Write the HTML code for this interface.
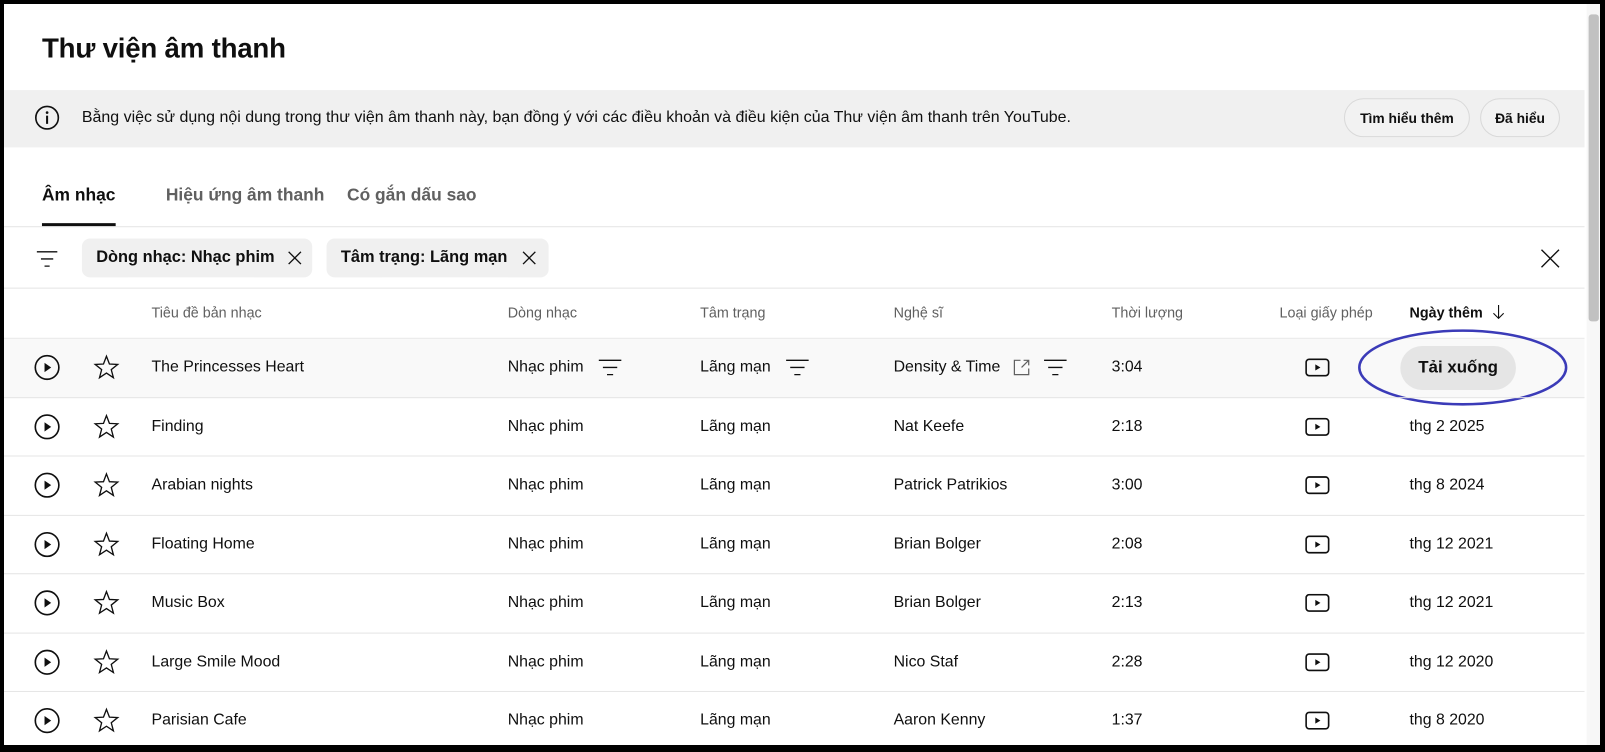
<!DOCTYPE html>
<html><head><meta charset="utf-8"><style>
*{box-sizing:border-box;margin:0;padding:0}
body{width:1605px;height:752px;background:#000;font-family:"Liberation Sans",Arial,sans-serif;color:#0f0f0f;position:relative;overflow:hidden}
.page{position:absolute;left:4px;top:4px;width:1596px;height:741px;background:#fff;overflow:hidden}
.inner{position:absolute;left:-4px;top:-4px;width:1568px;height:735px;transform:scale(1.0236);transform-origin:0 0}
.abs{position:absolute}
.t{position:absolute;white-space:nowrap}
.hl{position:absolute;left:0;width:1548px;height:1px;background:#e5e5e5}
.hdr{font-size:14px;color:#606060;top:297px}
.cell{font-size:15.5px;color:#0f0f0f}
.btn{position:absolute;border:1px solid #d9d9d9;border-radius:19px;font-size:13.5px;font-weight:bold;display:flex;align-items:center;justify-content:center;height:38px;top:96px;background:#f2f2f2}
.chip{position:absolute;top:233px;height:38px;background:#f0f0f0;border-radius:8px;font-size:16px;font-weight:bold;display:flex;align-items:center;padding-left:14px}
</style></head><body>
<div class="page"><div class="inner">
<div class="t" style="left:41px;top:32px;font-size:27px;font-weight:bold;letter-spacing:-0.2px">Thư viện âm thanh</div>
<div class="abs" style="left:0;top:88px;width:1548px;height:56px;background:#f0f0f0"></div>
<svg class="abs" style="left:33px;top:102px" width="26" height="26" viewBox="0 0 26 26"><circle cx="13" cy="13" r="11" fill="none" stroke="#0f0f0f" stroke-width="1.6"/><rect x="12" y="11" width="2" height="8" fill="#0f0f0f"/><circle cx="13" cy="8" r="1.3" fill="#0f0f0f"/></svg>
<div class="t" style="left:80px;top:106px;font-size:15.6px;color:#0f0f0f">Bằng việc sử dụng nội dung trong thư viện âm thanh này, bạn đồng ý với các điều khoản và điều kiện của Thư viện âm thanh trên YouTube.</div>
<div class="btn" style="left:1313px;width:123px">Tìm hiểu thêm</div>
<div class="btn" style="left:1446px;width:78px">Đã hiểu</div>
<div class="t" style="left:41px;top:181px;font-size:17px;font-weight:bold">Âm nhạc</div>
<div class="abs" style="left:41px;top:218px;width:72px;height:3px;background:#0f0f0f"></div>
<div class="t" style="left:162px;top:181px;font-size:17px;font-weight:bold;color:#606060">Hiệu ứng âm thanh</div>
<div class="t" style="left:339px;top:181px;font-size:17px;font-weight:bold;color:#606060">Có gắn dấu sao</div>
<div class="hl" style="top:221px"></div>
<svg class="abs" style="left:34px;top:241px" width="24" height="24" viewBox="0 0 24 24"><path d="M2 5h20M6 12h12M9.5 19h5" stroke="#0f0f0f" stroke-width="1.3" fill="none"/></svg>
<div class="chip" style="left:80px;width:225px">Dòng nhạc: Nhạc phim<svg style="position:absolute;right:10px;top:12px" width="14" height="14" viewBox="0 0 14 14"><path d="M1 1L13 13M13 1L1 13" stroke="#0f0f0f" stroke-width="1.3"/></svg></div>
<div class="chip" style="left:319px;width:217px">Tâm trạng: Lãng mạn<svg style="position:absolute;right:12px;top:12px" width="14" height="14" viewBox="0 0 14 14"><path d="M1 1L13 13M13 1L1 13" stroke="#0f0f0f" stroke-width="1.3"/></svg></div>
<svg class="abs" style="left:1505px;top:243px" width="19" height="19" viewBox="0 0 20 20"><path d="M1 1L19 19M19 1L1 19" stroke="#0f0f0f" stroke-width="1.4"/></svg>
<div class="hl" style="top:281px"></div>
<div class="t hdr" style="left:148px">Tiêu đề bản nhạc</div>
<div class="t hdr" style="left:496px">Dòng nhạc</div>
<div class="t hdr" style="left:684px">Tâm trạng</div>
<div class="t hdr" style="left:873px">Nghệ sĩ</div>
<div class="t hdr" style="left:1086px">Thời lượng</div>
<div class="t hdr" style="left:1250px">Loại giấy phép</div>
<div class="t hdr" style="left:1377px;color:#0f0f0f;font-weight:bold">Ngày thêm</div>
<svg class="abs" style="left:1458px;top:297px" width="12" height="16" viewBox="0 0 12 16"><path d="M6 1V14M1 9L6 14L11 9" stroke="#0f0f0f" stroke-width="1.1" fill="none"/></svg>
<div class="hl" style="top:330px"></div>
<div class="abs" style="left:0;top:331px;width:1548px;height:57px;background:#f9f9f9"></div>

<div id="rows"></div>

<div class="abs" style="left:1550px;top:0;width:14px;height:740px;background:#f7f7f7"></div>
<div class="abs" style="left:1552px;top:14px;width:10px;height:300px;background:#c1c1c1;border-radius:3px"></div>
</div></div>
<script>
var data=[["The Princesses Heart","Density & Time","3:04",""],["Finding","Nat Keefe","2:18","thg 2 2025"],["Arabian nights","Patrick Patrikios","3:00","thg 8 2024"],["Floating Home","Brian Bolger","2:08","thg 12 2021"],["Music Box","Brian Bolger","2:13","thg 12 2021"],["Large Smile Mood","Nico Staf","2:28","thg 12 2020"],["Parisian Cafe","Aaron Kenny","1:37","thg 8 2020"]];
var h="",filt='<svg width="24" height="24" viewBox="0 0 24 24" style="position:absolute;top:-3px;left:0"><path d="M1 5h22M5 12h14M9 19h6" stroke="#0f0f0f" stroke-width="1.3" fill="none"/></svg>';
data.forEach(function(r,i){
 var y=330+i*57.5, cy=y+29;
 h+='<svg class="abs" style="left:33px;top:'+(cy-13)+'px" width="26" height="26" viewBox="0 0 26 26"><circle cx="13" cy="13" r="11.5" fill="none" stroke="#0f0f0f" stroke-width="1.6"/><path d="M10.5 8.5L17 13L10.5 17.5Z" fill="#0f0f0f"/></svg>';
 h+='<svg class="abs" style="left:91px;top:'+(cy-13)+'px" width="26" height="26" viewBox="0 0 26 26"><path d="M13 2L15.9 9.6L24 10L17.7 15.1L19.8 23L13 18.5L6.2 23L8.3 15.1L2 10L10.1 9.6Z" fill="none" stroke="#0f0f0f" stroke-width="1.3"/></svg>';
 var ty=cy-9;
 h+='<div class="t cell" style="left:148px;top:'+ty+'px">'+r[0]+'</div>';
 h+='<div class="t cell" style="left:496px;top:'+ty+'px">Nhạc phim</div>';
 h+='<div class="t cell" style="left:684px;top:'+ty+'px">Lãng mạn</div>';
 h+='<div class="t cell" style="left:873px;top:'+ty+'px">'+r[1]+'</div>';
 h+='<div class="t cell" style="left:1086px;top:'+ty+'px">'+r[2]+'</div>';
 h+='<svg class="abs" style="left:1275px;top:'+(cy-9)+'px" width="26" height="18" viewBox="0 0 26 18"><rect x="1" y="1" width="22" height="16" rx="3" fill="none" stroke="#0f0f0f" stroke-width="1.6"/><path d="M10 6L15 9L10 12Z" fill="#0f0f0f"/></svg>';
 if(i==0){
  h+='<div class="abs" style="left:584px;top:'+(cy-9)+'px">'+filt+'</div>';
  h+='<div class="abs" style="left:767px;top:'+(cy-9)+'px">'+filt+'</div>';
  h+='<svg class="abs" style="left:989px;top:'+(cy-9)+'px" width="18" height="18" viewBox="0 0 18 18"><path d="M8 2H2V16H16V10M11 2H16V7M16 2L9 9" fill="none" stroke="#606060" stroke-width="1.2"/></svg>';
  h+='<div class="abs" style="left:1019px;top:'+(cy-9)+'px">'+filt+'</div>';
  h+='<div class="abs" style="left:1368px;top:'+(cy-21)+'px;width:113px;height:43px;border-radius:22px;background:#e5e5e5;font-size:16.5px;font-weight:bold;display:flex;align-items:center;justify-content:center">Tải xuống</div>';
  h+='<svg class="abs" style="left:1325px;top:'+(cy-39)+'px" width="208" height="78" viewBox="0 0 208 78"><ellipse cx="104" cy="39" rx="101" ry="36" fill="none" stroke="#3b3bb8" stroke-width="2.5"/></svg>';
 } else {
  h+='<div class="t cell" style="left:1377px;top:'+ty+'px">'+r[3]+'</div>';
 }
 h+='<div class="hl" style="top:'+(y+57.5)+'px"></div>';
});
document.getElementById("rows").outerHTML=h;
</script>
</body></html>
